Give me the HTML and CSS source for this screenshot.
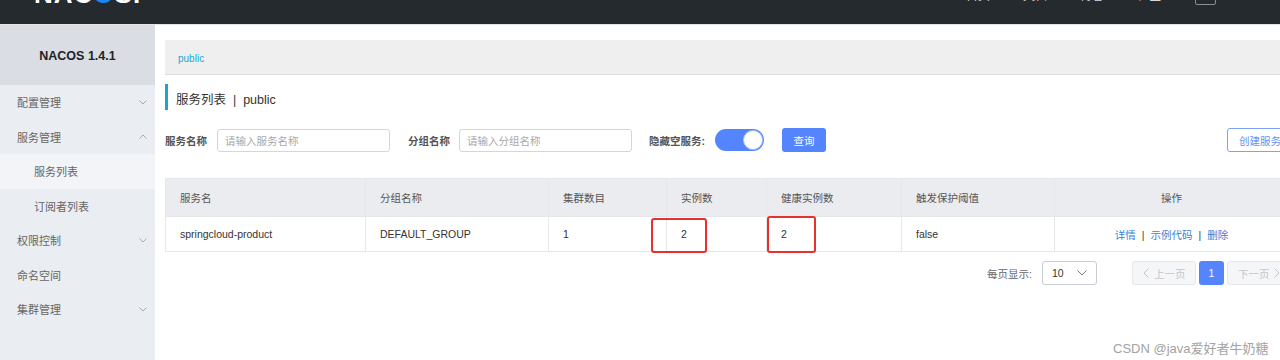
FILE: index.html
```html
<!DOCTYPE html>
<html lang="zh-CN">
<head>
<meta charset="utf-8">
<title>Nacos 服务列表</title>
<link rel="stylesheet" href="styles.css">
</head>
<body>
<header class="header">
  <div class="logo">NAC<span class="logo-o">O</span>S<span class="logo-dot">.</span></div>
  <nav class="top-nav">
    <span class="nav-item">首页</span>
    <span class="nav-item">文档</span>
    <span class="nav-item">博客</span>
    <span class="nav-item">社区</span>
    <span class="lang-btn">En</span>
  </nav>
</header>
<div class="layout">
  <aside class="sidebar">
    <div class="brand">NACOS 1.4.1</div>
    <ul class="menu">
      <li class="menu-item"><span>配置管理</span><svg class="chev" width="8" height="5" viewBox="0 0 8 5"><polyline points="0.5,0.5 4,4 7.5,0.5" fill="none" stroke="#aaa" stroke-width="1"/></svg></li>
      <li class="menu-item"><span>服务管理</span><svg class="chev" width="8" height="5" viewBox="0 0 8 5"><polyline points="0.5,4.5 4,1 7.5,4.5" fill="none" stroke="#aaa" stroke-width="1"/></svg></li>
      <li class="menu-item sub active"><span>服务列表</span></li>
      <li class="menu-item sub"><span>订阅者列表</span></li>
      <li class="menu-item"><span>权限控制</span><svg class="chev" width="8" height="5" viewBox="0 0 8 5"><polyline points="0.5,0.5 4,4 7.5,0.5" fill="none" stroke="#aaa" stroke-width="1"/></svg></li>
      <li class="menu-item"><span>命名空间</span></li>
      <li class="menu-item"><span>集群管理</span><svg class="chev" width="8" height="5" viewBox="0 0 8 5"><polyline points="0.5,0.5 4,4 7.5,0.5" fill="none" stroke="#aaa" stroke-width="1"/></svg></li>
    </ul>
  </aside>
  <main class="main">
    <div class="breadcrumb"><span class="ns">public</span></div>
    <h1 class="page-title">服务列表&nbsp;&nbsp;|&nbsp;&nbsp;public</h1>
    <div class="search-row">
      <label class="lbl">服务名称</label>
      <div class="input input-1">请输入服务名称</div>
      <label class="lbl lbl-2">分组名称</label>
      <div class="input input-2">请输入分组名称</div>
      <label class="lbl lbl-3">隐藏空服务:</label>
      <div class="switch"><span class="knob"></span></div>
      <button class="btn-primary">查询</button>
      <button class="btn-outline">创建服务</button>
    </div>
    <div class="table-wrap">
      <table class="table">
        <colgroup>
          <col style="width:200px"><col style="width:183px"><col style="width:118px"><col style="width:100px"><col style="width:135px"><col style="width:153px"><col style="width:234px">
        </colgroup>
        <thead>
          <tr><th>服务名</th><th>分组名称</th><th>集群数目</th><th>实例数</th><th>健康实例数</th><th>触发保护阈值</th><th class="center">操作</th></tr>
        </thead>
        <tbody>
          <tr>
            <td>springcloud-product</td><td>DEFAULT_GROUP</td><td>1</td><td>2</td><td>2</td><td>false</td>
            <td class="center ops"><a>详情</a><span class="sep">|</span><a>示例代码</a><span class="sep">|</span><a>删除</a></td>
          </tr>
        </tbody>
      </table>
      <div class="mark mark-1"></div>
      <div class="mark mark-2"></div>
    </div>
    <div class="pager">
      <span class="pager-label">每页显示:</span>
      <div class="select"><span>10</span><svg width="10" height="6" viewBox="0 0 10 6"><polyline points="0.5,0.5 5,5 9.5,0.5" fill="none" stroke="#777" stroke-width="1"/></svg></div>
      <div class="pg-btn prev"><svg width="6" height="10" viewBox="0 0 6 10"><polyline points="5.5,0.5 1,5 5.5,9.5" fill="none" stroke="#c4c6cc" stroke-width="1"/></svg><span>上一页</span></div>
      <div class="pg-num">1</div>
      <div class="pg-btn next"><span>下一页</span><svg width="6" height="10" viewBox="0 0 6 10"><polyline points="0.5,0.5 5,5 0.5,9.5" fill="none" stroke="#c4c6cc" stroke-width="1"/></svg></div>
    </div>
  </main>
</div>
<div class="watermark">CSDN @java爱好者牛奶糖</div>
</body>
</html>
```
FILE: styles.css
```css
* { box-sizing: border-box; }
html, body { margin: 0; padding: 0; }
body {
  width: 1280px;
  height: 360px;
  overflow: hidden;
  font-family: "Liberation Sans", "Noto Sans CJK SC", sans-serif;
  font-size: 10.5px;
  color: #333;
  background: #fff;
}

.header {
  height: 25px;
  background: #252a2f;
  border-bottom: 1px solid #e4e4e4;
  display: flex;
  align-items: flex-end;
  overflow: hidden;
}
.logo {
  margin-left: 34px;
  margin-bottom: 17px;
  font-size: 26px;
  line-height: 26px;
  font-weight: bold;
  color: #fff;
  letter-spacing: 1px;
}
.logo-o { color: #1a86f0; }
.logo-dot { color: #fff; }
.top-nav {
  margin-left: auto;
  margin-right: 64px;
  display: flex;
  align-items: flex-end;
}
.nav-item {
  color: #d8d8d8;
  font-size: 12px;
  line-height: 16px;
  margin-left: 33px;
  margin-bottom: 20px;
}
.lang-btn {
  width: 21px;
  height: 24px;
  border: 1px solid #8a8e93;
  border-radius: 2px;
  color: #ddd;
  font-size: 11px;
  margin-left: 34px;
  margin-bottom: 19px;
  text-align: center;
}

.layout {
  display: flex;
  height: 335px;
}
.sidebar {
  width: 155px;
  flex: none;
  background: #eaedf1;
}
.brand {
  height: 60px;
  background: #dadde3;
  display: flex;
  align-items: center;
  justify-content: center;
  font-weight: bold;
  font-size: 12.5px;
  color: #222;
  padding-top: 1px;
}
.menu {
  list-style: none;
  margin: 0;
  padding: 0;
}
.menu-item {
  height: 34.5px;
  display: flex;
  align-items: center;
  padding-left: 17px;
  padding-right: 8px;
  font-size: 11px;
  color: #666;
}
.menu-item .chev { margin-left: auto; }
.menu-item.sub { padding-left: 34px; }
.menu-item.active { background: #f3f4f7; }

.main {
  flex: 1;
  min-width: 0;
  padding: 15px 0 0 10px;
  overflow: hidden;
}
.breadcrumb {
  height: 35px;
  background: #efefef;
  border-bottom: 1px solid #dcdcdc;
  display: flex;
  align-items: center;
  padding-left: 13px;
  padding-top: 2px;
}
.ns { color: #1fa6d8; font-size: 10px; }

.page-title {
  margin: 9px 0 0 0;
  height: 26px;
  border-left: 3px solid #1ea2d6;
  padding-left: 8px;
  display: flex;
  align-items: center;
  font-weight: normal;
  font-size: 12.5px;
  color: #333;
  padding-top: 2px;
}

.search-row {
  margin-top: 18px;
  height: 24px;
  display: flex;
  align-items: center;
  white-space: nowrap;
}
.search-row > * { flex: none; }
.lbl {
  font-weight: bold;
  color: #555;
  font-size: 10.5px;
}
.lbl-2 { margin-left: 18px; }
.lbl-3 { margin-left: 17px; }
.input {
  width: 173px;
  height: 23px;
  border: 1px solid #d6d6d9;
  border-radius: 3px;
  color: #a8a8a8;
  font-size: 10.5px;
  display: flex;
  align-items: center;
  padding-left: 7px;
}
.input-1 { margin-left: 10px; }
.input-2 { margin-left: 9px; }
.switch {
  width: 49px;
  height: 22px;
  border-radius: 11px;
  background: #5584ff;
  margin-left: 10px;
  display: flex;
  align-items: center;
  justify-content: flex-end;
  padding-right: 1px;
}
.knob {
  width: 20px;
  height: 20px;
  border-radius: 50%;
  background: #fff;
  border: 1px solid #a9c0ff;
}
.btn-primary {
  margin-left: 18px;
  width: 44px;
  height: 24px;
  border: none;
  border-radius: 3px;
  background: #5584ff;
  color: #fff;
  font-family: inherit;
  font-size: 10.5px;
  padding: 0;
}
.btn-outline {
  margin-left: 401px;
  width: 66px;
  height: 24px;
  border: 1px solid #7f9ffc;
  border-radius: 3px;
  background: #fff;
  color: #6a8dfa;
  font-family: inherit;
  font-size: 10.5px;
  padding: 0 0 0 11px;
  text-align: left;
}

.table-wrap {
  margin-top: 26px;
  position: relative;
  width: 1123px;
}
.table {
  border-collapse: collapse;
  table-layout: fixed;
  width: 1123px;
}
.table th, .table td {
  border: 1px solid #e6e7eb;
  text-align: left;
  padding: 0 0 0 14px;
  font-size: 10.5px;
  white-space: nowrap;
}
.table th {
  height: 38px;
  background: #ebecf0;
  font-weight: normal;
  color: #555;
}
.table td {
  height: 35px;
  color: #333;
}
.table .center { text-align: center; padding-left: 0; }
.ops a { color: #3b7fd7; }
.ops .sep { color: #444; margin: 0 6px; }

.mark {
  position: absolute;
  border: 2px solid #e8302f;
  border-radius: 3px;
}
.mark-1 { left: 486px; top: 40px; width: 56px; height: 35px; }
.mark-2 { left: 602px; top: 38px; width: 49px; height: 37px; }

.pager {
  margin-top: 9px;
  display: flex;
  align-items: center;
  height: 24px;
  white-space: nowrap;
}
.pager > * { flex: none; }
.pager-label {
  margin-left: 822px;
  color: #666;
  font-size: 10.5px;
}
.select {
  margin-left: 10px;
  width: 55px;
  height: 24px;
  border: 1px solid #c9ccd3;
  border-radius: 3px;
  display: flex;
  align-items: center;
  justify-content: space-between;
  padding: 0 9px 0 9px;
  font-size: 10.5px;
  color: #333;
}
.pg-btn {
  height: 24px;
  border: 1px solid #e6e7eb;
  background: #f5f6f8;
  border-radius: 3px;
  display: flex;
  align-items: center;
  gap: 5px;
  color: #c4c6cc;
  font-size: 10.5px;
}
.prev { margin-left: 35px; width: 64px; padding-left: 10px; }
.next { margin-left: 3px; width: 64px; padding-left: 10px; }
.pg-num {
  margin-left: 3px;
  width: 25px;
  height: 24px;
  border-radius: 3px;
  background: #5584ff;
  color: #fff;
  display: flex;
  align-items: center;
  justify-content: center;
  font-size: 10.5px;
}

.watermark {
  position: absolute;
  left: 1113px;
  top: 338px;
  font-size: 13px;
  color: #a3a3a3;
  white-space: nowrap;
  font-family: "Liberation Sans", "Noto Sans CJK SC", sans-serif;
}
```
